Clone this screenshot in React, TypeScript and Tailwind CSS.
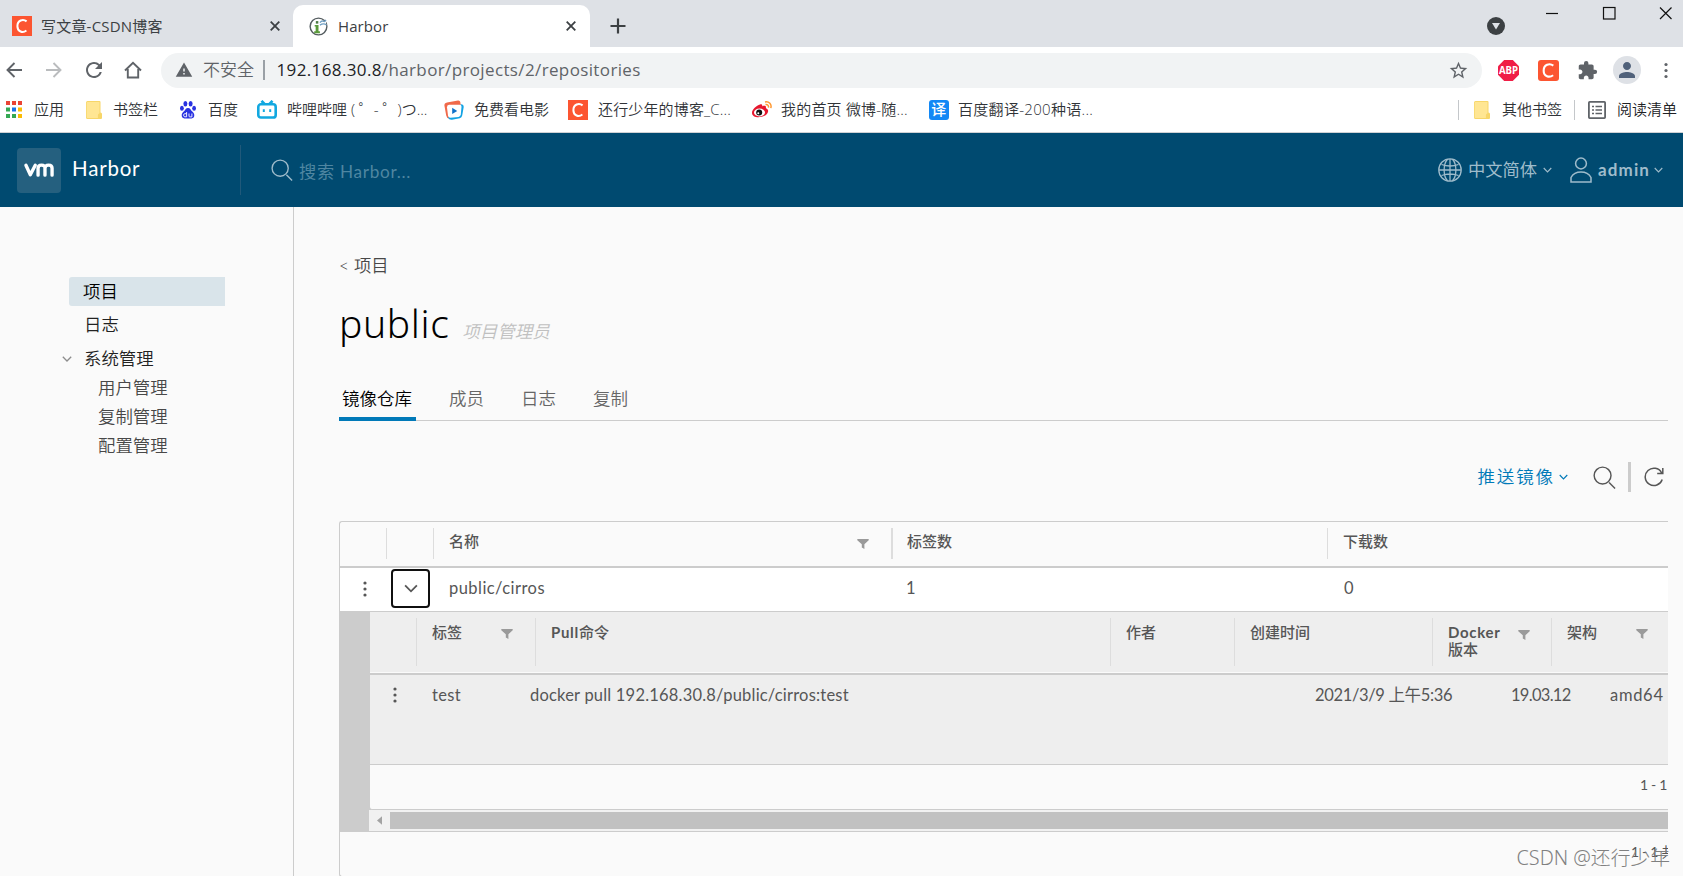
import type { ReactNode } from "react";
import { MdExtension, MdPerson, MdStarBorder, MdWarning, MdRefresh } from "react-icons/md";

const Chevron = ({ className }: { className: string }) => (
  <svg viewBox="0 0 10 6" fill="none" stroke="currentColor" strokeWidth="1.3" className={className}>
    <path d="M0.8 0.8 5 5 9.2 0.8" />
  </svg>
);

const Close = ({ className }: { className: string }) => (
  <svg viewBox="0 0 10 10" fill="none" stroke="#3c4043" strokeWidth="1.8" className={className}>
    <path d="M0.7 0.7 9.3 9.3M9.3 0.7 0.7 9.3" />
  </svg>
);

const Dots = ({ className }: { className: string }) => (
  <svg viewBox="0 0 4 16" fill="currentColor" className={className}>
    <circle cx="2" cy="2" r="1.6" />
    <circle cx="2" cy="8" r="1.6" />
    <circle cx="2" cy="14" r="1.6" />
  </svg>
);

const Filter = () => (
  <svg viewBox="0 0 12 10" className="h-[10px] w-3 shrink-0" fill="#9a9a9a">
    <path d="M0.3 0h11.4v1.2L7.4 5.2V10L4.8 8.6V5.2L0.3 1.2z" />
  </svg>
);

const Search = ({ className }: { className: string }) => (
  <svg viewBox="0 0 24 24" fill="none" stroke="currentColor" strokeWidth="1.5" className={className}>
    <circle cx="10" cy="10" r="8.8" />
    <path d="M16.8 17.2 23 23.4" />
  </svg>
);

const CsdnMark = ({ className }: { className: string }) => (
  <svg viewBox="0 0 20 20" className={className}>
    <rect width="20" height="20" fill="#fc5531" />
    <path d="M14.6 5.4C11 2.6 5.4 4.3 5.4 10.2c0 5.6 5.4 7 9 4.3" fill="none" stroke="#fff" strokeWidth="2" />
  </svg>
);

const Folder = ({ className }: { className: string }) => (
  <svg viewBox="0 0 16 18" className={className}>
    <path d="M1.5 0h12q1 0 1 1v10.500q1.500 0 1.500 1.500v4q0 1-1 1H1.500Q0 18 0 16.500v-15Q0 0 1.500 0z" fill="#f7d669" />
    <path d="M1.500 1h12v11.200q-1.600.3-1.600 2V17H1.500q-.8 0-.8-.8V1.800Q.7 1 1.500 1z" fill="#ffe693" />
  </svg>
);

const Apps = ({ className }: { className: string }) => (
  <svg viewBox="0 0 16 17" className={className}>
    <path d="M0 0h4v4H0zM6 0h4v4H6zM12 0h4v4h-4z" fill="#ea4335" />
    <path d="M0 6.5h4v4H0z" fill="#34a853" />
    <path d="M6 6.5h4v4H6z" fill="#1a73e8" />
    <path d="M12 6.5h4v4h-4z" fill="#fbbc04" />
    <path d="M0 13h4v4H0zM6 13h4v4H6z" fill="#34a853" />
    <path d="M12 13h4v4h-4z" fill="#fbbc04" />
  </svg>
);

const Bili = ({ className }: { className: string }) => (
  <svg viewBox="0 0 20 19" className={className} fill="none" stroke="#12a8e0" strokeWidth="2.6">
    <path d="M4.500.8 7.500 4M15.500.8 12.500 4" />
    <rect x="1.300" y="4.300" width="17.400" height="13.200" rx="2.600" />
    <path d="M6.800 9.200v2.800M13.200 9.200v2.800" strokeWidth="2" />
  </svg>
);

const Movie = ({ className }: { className: string }) => (
  <svg viewBox="0 0 20 20" className={className}>
    <path d="M3 2.500 14 .4q2-.2 2.300 1.600l.5 3.500L5 6v12.500Q2.700 18 2.200 15.500L.4 5.500Q.2 3.200 3 2.500z" fill="#f0694a" />
    <path d="M17 4.200q2.700.2 2.700 2.700l-1.500 8.700q-.4 2.200-2.400 2.600L8 19.800q-3 .4-4-2.300z" fill="#12a3e4" />
    <path d="M5 4.800h10.600q2 0 1.900 2l-.7 7.800q-.2 2-2.200 2.300l-8.200.8q-2 0-2.400-2L3 7.300q-.1-2.300 2-2.500z" fill="#fff" />
    <path d="M8.200 7.700 13.200 10.900 8.200 14z" fill="#1272c8" />
  </svg>
);

const HarborMark = () => (
  <svg viewBox="0 0 20 20" className="size-[19px]">
    <circle cx="10" cy="10" r="8.800" fill="#fff" stroke="#555d60" strokeWidth="1.500" />
    <path d="M6 8.300h4v6.700h1.500v2H5.500v-2H7V10H6z" fill="#5b9a3b" />
    <path d="M7.200 4.300h2.600v2.700H7.200z" fill="#4d7a45" />
    <path d="M11.500 6q2-3 3.500-1.500t3-1.500v7.500q-3.500 1-6.500-2z" fill="#fff" />
    <path d="M11.500 6q2-2.500 3.500-1.500t2.800-1.500M11.500 8.500q4-2.500 7 0" stroke="#6f9fc4" strokeWidth="1.400" fill="none" />
  </svg>
);

const ListIcon = () => (
  <svg viewBox="0 0 18 18" className="h-[18px] w-[18px]" fill="none" stroke="#5f6368" strokeWidth="1.800">
    <rect x="0.900" y="0.900" width="16.200" height="16.200" rx="0.800" />
    <path d="M4 5.500h2M7.500 5.500h6.500M4 9h2M7.500 9h6.500M4 12.500h2M7.500 12.500h6.500" strokeWidth="1.500" />
  </svg>
);

const Bookmark = ({ icon, label, className }: { icon: ReactNode; label: string; className: string }) => (
  <div className={`flex shrink-0 items-center whitespace-nowrap ${className}`}>
    {icon}
    <span>{label}</span>
  </div>
);

function Browser() {
  return (
    <header className="h-[133px] border-b border-[#cfd1d4] bg-white font-['Open_Sans','Noto_Sans_CJK_SC',sans-serif] text-[15px] font-[350] text-[#303337]">
      <div className="flex h-[47px] justify-between bg-[#dee1e6]">
        <div className="flex font-normal text-[#3c4043]">
          <div className="flex h-[47px] w-[293px] items-center pt-[5px] pl-3">
            <CsdnMark className="size-5" />
            <span className="ml-[9px] w-[229px] text-[15px] tracking-[0.200px]">写文章-CSDN博客</span>
            <Close className="size-[10px]" />
          </div>
          <div className="mt-[5px] flex h-[42px] w-[297px] items-center rounded-t-[10px] bg-white pl-4">
            <HarborMark />
            <span className="ml-[10px] w-[228px] tracking-[0.100px]">Harbor</span>
            <Close className="size-[10px]" />
          </div>
          <svg viewBox="0 0 16 16" className="mt-[18px] ml-5 size-4" stroke="#3c4043" strokeWidth="2.200">
            <path d="M8 0.500v15M0.500 8h15" />
          </svg>
        </div>
        <div className="flex pr-[11px]">
          <svg viewBox="0 0 18 18" className="mt-[17px] size-[18px]">
            <circle cx="9" cy="9" r="9" fill="#3c4043" />
            <path d="M5 6h8l-4 6.500z" fill="#dee1e6" />
          </svg>
          <svg viewBox="0 0 126 14" className="mt-[6px] ml-[41px] h-[14px] w-[126px]" fill="none" stroke="#111" strokeWidth="1.200">
            <path d="M0 7.500h12" />
            <rect x="57.500" y="1.500" width="11.500" height="11.500" />
            <path d="M114 1.500 125.500 13M125.500 1.500 114 13" />
          </svg>
        </div>
      </div>

      <div className="flex h-[46px] items-center pl-[6px]">
        <svg viewBox="0 0 16 16" className="size-4" fill="none" stroke="#5f6368" strokeWidth="1.900">
          <path d="M16 8H1.500M8.500 1 1.500 8l7 7" />
        </svg>
        <svg viewBox="0 0 16 16" className="ml-6 size-4" fill="none" stroke="#babcbe" strokeWidth="1.900">
          <path d="M0 8h14.500M7.500 1l7 7-7 7" />
        </svg>
        <MdRefresh className="ml-5 size-6 text-[#5f6368]" />
        <svg viewBox="0 0 18 18" className="ml-[18px] size-[18px]" fill="none" stroke="#5f6368" strokeWidth="1.900">
          <path d="M1 9.500 9 1.800l8 7.700M3.800 8v8.500h10.400V8" />
        </svg>
        <div className="ml-[19px] flex h-[35px] w-[1321px] items-center rounded-full bg-[#f1f3f4] pr-3 pl-[14px] text-[17px]">
          <MdWarning className="size-[18px] text-[#5f6368]" />
          <span className="ml-[10px] text-[#5f6368]">不安全</span>
          <span className="mr-3 ml-[9px] h-5 w-[1.500px] bg-[#9aa0a6]" />
          <span className="grow font-normal tracking-[0.370px] text-[#5f6368]">
            <span className="text-[#202124]">192.168.30.8</span>/harbor/projects/2/repositories
          </span>
          <MdStarBorder className="mr-px size-[21px] text-[#5f6368]" />
        </div>
        <svg viewBox="0 0 22 22" className="ml-[16px] size-[21px]">
          <path d="M6.500 0h9L22 6.500v9L15.500 22h-9L0 15.500v-9z" fill="#f01e46" />
          <text x="11" y="15" textAnchor="middle" fontSize="11" fontWeight="700" fill="#fff" textLength="20" lengthAdjust="spacingAndGlyphs">ABP</text>
        </svg>
        <CsdnMark className="ml-[19px] size-[21px] rounded-[3px]" />
        <MdExtension className="ml-[18px] size-[21px] text-[#5f6368]" />
        <span className="ml-[15px] flex size-7 items-center justify-center rounded-full bg-[#dee1e6]">
          <MdPerson className="size-6 text-[#50617a]" />
        </span>
        <Dots className="ml-[23px] h-[17px] w-1 text-[#5f6368]" />
      </div>

      <div className="flex h-[33px] items-center pl-[6px]">
        <Bookmark className="w-[80px] gap-3" icon={<Apps className="h-[17px] w-4" />} label="应用" />
        <Bookmark className="w-[94px] gap-[11px]" icon={<Folder className="h-[18px] w-4" />} label="书签栏" />
        <Bookmark
          className="w-[77px] gap-3"
          icon={
            <svg viewBox="0 0 16 18" className="h-[18px] w-4" fill="#2932e1">
              <ellipse cx="5.400" cy="2.800" rx="2" ry="2.700" />
              <ellipse cx="10.600" cy="2.800" rx="2" ry="2.700" />
              <ellipse cx="1.900" cy="7.200" rx="1.900" ry="2.500" />
              <ellipse cx="14.100" cy="7.200" rx="1.900" ry="2.500" />
              <path d="M8 7c2.200 0 2.600 1.900 4 3.300 1.600 1.500 2.700 2.700 2.200 4.900-.6 2.800-3.800 2.200-6.200 2.200s-5.600.6-6.200-2.200c-.5-2.200.6-3.400 2.200-4.900C5.400 8.900 5.800 7 8 7z" />
              <path d="M6.600 11v4.800H4.800q-1.200-.2-1.200-1.600t1.200-1.500h1.800M9 12.500v2.600q0 .8.900.8h2v-3.400" fill="none" stroke="#fff" strokeWidth="0.900" />
            </svg>
          }
          label="百度"
        />
        <Bookmark className="w-[187px] gap-[10px]" icon={<Bili className="h-[19px] w-5" />} label="哔哩哔哩 ( ゜- ゜)つ..." />
        <Bookmark className="w-[124px] gap-[10px]" icon={<Movie className="size-5" />} label="免费看电影" />
        <Bookmark className="w-[184px] gap-[10px] tracking-[0.150px]" icon={<CsdnMark className="size-5" />} label="还行少年的博客_C..." />
        <Bookmark
          className="w-[177px] gap-[9px] tracking-[0.200px]"
          icon={
            <svg viewBox="0 0 20 17" className="h-[17px] w-5">
              <path d="M8 3.500c1.500-.8 2.500 0 2.300 1.700 2-.9 4-.5 3.600 1.300-.1.700.2.900.9 1.300 2.200 1.200 1.400 4-.4 5.800C11.300 16.800 0 18 0 11.700 0 8.500 4.500 4.500 8 3.500z" fill="#e6162d" />
              <ellipse cx="7.500" cy="11.500" rx="5.500" ry="3.900" fill="#fff" />
              <circle cx="7.200" cy="11.600" r="3" fill="#111" />
              <circle cx="6.300" cy="12.200" r="1" fill="#fff" />
              <path d="M13 .9c4-.8 7 2.300 5.800 6.200M13.500 3.600c2-.4 3.500 1 2.900 3" fill="none" stroke="#ff9933" strokeWidth="1.500" />
            </svg>
          }
          label="我的首页 微博-随..."
        />
        <Bookmark
          className="gap-[9px] tracking-[0.300px]"
          icon={<span className="flex size-5 items-center justify-center rounded-[3px] bg-[#1388f5] text-[15px] font-medium text-white">译</span>}
          label="百度翻译-200种语..."
        />
        <div className="ml-auto flex h-5 items-center pr-[6px]">
          <span className="mr-[15px] h-5 w-px bg-[#c4c7ca]" />
          <Bookmark className="w-[100px] gap-3" icon={<Folder className="h-[18px] w-4" />} label="其他书签" />
          <span className="mr-[13px] h-5 w-px bg-[#c4c7ca]" />
          <Bookmark className="gap-[11px] text-[#202124]" icon={<ListIcon />} label="阅读清单" />
        </div>
      </div>
    </header>
  );
}

function AppHeader() {
  return (
    <div className="flex h-[74px] items-center bg-[#004a70] text-[#9fbccb]">
      <div className="ml-[17px] flex h-[45px] w-11 items-center justify-center rounded-[4px] bg-[#25607f]">
        <svg viewBox="0 0 32 15" className="h-[14px] w-[32px]" fill="none" stroke="#fff" strokeWidth="3.600" strokeLinecap="round" strokeLinejoin="round">
          <path d="M2 2.500 6.700 12.500 12 2.500" />
          <path d="M15 13V5.500Q15 2.300 18.800 2.300T22.400 5.500V13M22.400 5.500Q22.600 2.300 26.300 2.300T30 5.500V13" />
        </svg>
      </div>
      <span className="mb-1 ml-[11px] w-[168px] text-[20.500px] tracking-[0.800px] text-white">Harbor</span>
      <span className="h-[50px] w-px bg-[#20597a]" />
      <Search className="ml-[30px] size-[22px]" />
      <span className="mt-[3px] ml-[6px] grow text-[17.200px] tracking-[0.700px] text-[#4f86a1]">搜索 Harbor...</span>
      <svg viewBox="0 0 24 24" className="size-6" fill="none" stroke="currentColor" strokeWidth="1.300">
        <circle cx="12" cy="12" r="11.200" />
        <path d="M1 12h22M3.500 6.500Q12 9.500 20.500 6.500M3.500 17.500Q12 14.500 20.500 17.500M9.500 1.200C5 6 5 18 9.500 22.800M14.500 1.200C19 6 19 18 14.500 22.800M12 1v22" />
      </svg>
      <span className="ml-[6px] text-[17.300px]">中文简体</span>
      <Chevron className="ml-[6px] h-[6px] w-[9px]" />
      <svg viewBox="0 0 22 26" className="ml-[18px] h-[26px] w-[22px]" fill="none" stroke="currentColor" strokeWidth="1.500">
        <circle cx="11" cy="6.500" r="5.400" />
        <path d="M1 25V20.500Q4 15 11 15T21 20.500V25z" />
      </svg>
      <span className="ml-[6px] text-[17px] font-bold tracking-[1.100px]">admin</span>
      <Chevron className="mr-[20px] ml-[4px] h-[6px] w-[9px]" />
    </div>
  );
}

function Sidebar() {
  return (
    <nav className="w-[294px] shrink-0 border-r border-[#ccc] pt-[70px] text-[17.400px] leading-[29px] font-[350] text-[#222]">
      <div className="ml-[69px] h-[29px] w-[156px] rounded-l-[3px] bg-[#d9e4ea] pl-[14px] text-black">项目</div>
      <div className="mt-[4px] ml-[84px]">日志</div>
      <div className="mt-[5px] flex items-center pl-[62px]">
        <Chevron className="mr-[12px] h-[6px] w-[10px] text-[#8c8c8c]" />
        系统管理
      </div>
      <div className="ml-[98px] text-[#484848]">
        <div>用户管理</div>
        <div>复制管理</div>
        <div>配置管理</div>
      </div>
    </nav>
  );
}

const Sep = ({ className }: { className: string }) => <span className={`shrink-0 bg-[#ddd] ${className}`} />;

function InnerGrid() {
  return (
    <div className="flex h-[220px] border-b border-[#ccc] bg-[#ccc]">
      <div className="ml-[29px] flex w-[1299px] flex-col overflow-hidden">
        <div className="ml-px flex h-[60px] shrink-0 bg-[#eee] pt-[6px] text-[15px] leading-[17px] font-medium">
          <Sep className="ml-[46px] h-12 w-px" />
          <div className="mt-[6px] flex h-[17px] w-[118px] items-center pl-[15px]">
            <span className="mr-[39px]">标签</span>
            <span className="mt-[3px]"><Filter /></span>
          </div>
          <Sep className="h-12 w-px" />
          <div className="mt-[6px] w-[574px] pl-[15px]"><span className="font-bold tracking-[0.700px]">Pull</span>命令</div>
          <Sep className="h-12 w-px" />
          <div className="mt-[6px] w-[123px] pl-[15px]">作者</div>
          <Sep className="h-12 w-px" />
          <div className="mt-[6px] w-[197px] pl-[15px]">创建时间</div>
          <Sep className="h-12 w-px" />
          <div className="mt-[6px] flex h-[34px] w-[118px] pl-[15px]">
            <span className="w-[70px]"><span className="font-bold tracking-[0.700px]">Docker</span><br />版本</span>
            <span className="mt-[6px]"><Filter /></span>
          </div>
          <Sep className="h-12 w-px" />
          <div className="mt-[6px] flex h-[17px] items-center pl-[15px]">
            <span className="mr-[39px]">架构</span>
            <span className="mt-[3px]"><Filter /></span>
          </div>
        </div>
        <div className="ml-px h-px shrink-0 bg-[#fafafa]" />
        <div className="ml-px h-[2px] shrink-0 bg-[#ccc]" />
        <div className="ml-px flex h-[90px] shrink-0 items-start border-b border-[#ccc] bg-[#eee] pt-2 text-[16.500px] leading-6 whitespace-nowrap">
          <Dots className="mt-1 ml-[23px] h-4 w-1" />
          <span className="ml-[35px] w-[98px] tracking-[0.300px]">test</span>
          <span className="w-[785px] tracking-[0.200px]">docker pull 192.168.30.8/public/cirros:test</span>
          <span className="w-[196px] tracking-[-0.350px]">2021/3/9 上午5:36</span>
          <span className="w-[99px] tracking-[-0.700px]">19.03.12</span>
          <span className="tracking-[0.700px]">amd64</span>
        </div>
        <div className="ml-px h-[45px] shrink-0 rounded-bl-[3px] border-b border-[#ccc] bg-[#fafafa] pt-2 pr-[1px] text-right text-[14px] leading-6 tracking-[-0.300px]">1 - 1</div>
        <div className="flex h-[21px] items-center bg-[#f1f1f1]">
          <svg viewBox="0 0 6 10" className="mr-[8px] ml-2 h-[9px] w-[5px]" fill="#a3a3a3">
            <path d="M6 0v10L0 5z" />
          </svg>
          <span className="h-[17px] grow bg-[#c1c1c1]" />
        </div>
      </div>
    </div>
  );
}

function Main() {
  return (
    <main className="relative w-[1389px] pl-[45px] text-[#565656]">
      <div className="w-[1329px] overflow-hidden">
        <div className="mt-[47px] text-[17.300px] leading-6 font-[350] text-[#484848]">
          <span className="mr-[5px]">&lt;</span>项目
        </div>
        <div className="mt-[21px] flex h-12 items-baseline">
          <h1 className="font-['Noto_Sans','Open_Sans',sans-serif] text-[39px] leading-12 font-light tracking-[0.600px] text-black">public</h1>
          <span className="ml-[13px] text-[17.500px] font-[350] text-[#c0c0c0] italic">项目管理员</span>
        </div>
        <div className="relative mt-[33px] flex h-[41px] border-b border-[#ccc] text-[17.500px] leading-[38px] font-[350] text-[#666]">
          <span className="h-[41px] w-[77px] border-b-4 border-[#0079b8] pl-[3px] text-black">镜像仓库</span>
          <span className="ml-[33px] w-[72px]">成员</span>
          <span className="w-[72px]">日志</span>
          <span>复制</span>
        </div>
        <div className="mt-[41px] flex h-[30px] items-center justify-end pr-[4px]">
          <span className="text-[17.500px] font-[350] tracking-[1.900px] text-[#0079b8]">推送镜像</span>
          <Chevron className="mr-[25px] ml-[4px] h-[6px] w-[9px] text-[#0079b8]" />
          <Search className="size-[23px]" />
          <span className="mr-[13px] ml-[12px] h-[30px] w-[3px] bg-[#ccc]" />
          <svg viewBox="0 0 20 20" className="size-5" fill="none" stroke="currentColor" strokeWidth="1.500">
            <path d="M18.200 12.500A8.700 8.700 0 1 1 17.600 5.800M18.800 1v5.600h-5.600" />
          </svg>
        </div>
        <div className="mt-[29px] h-[356px] overflow-hidden rounded-tl-[3px] rounded-bl-[3px] border-t border-b border-l border-[#ccc]">
          <div className="flex h-[46px] border-b-2 border-[#ccc] pt-[6px] text-[15px] leading-[26px] font-medium">
            <Sep className="ml-[46px] h-[31px] w-px" />
            <Sep className="ml-[46px] h-[31px] w-px" />
            <div className="flex w-[457px] items-center justify-between pr-[22px] pb-[12px] pl-[15px]">
              名称
              <span className="mt-[6px]"><Filter /></span>
            </div>
            <Sep className="h-[31px] w-[2px]" />
            <div className="w-[434px] pl-[14px]">标签数</div>
            <Sep className="h-[31px] w-px" />
            <div className="pl-[15px]">下载数</div>
          </div>
          <div className="flex h-[44px] items-center border-b border-[#ccc] bg-white pb-[2px] text-[16.500px]">
            <Dots className="ml-[23px] h-4 w-1" />
            <span className="mt-[-1px] ml-[24px] flex size-[39px] shrink-0 items-center justify-center rounded-[4px] border-2 border-[#101010]">
              <Chevron className="h-[9px] w-[14px]" />
            </span>
            <span className="ml-[19px] w-[457px] tracking-[0.450px]">public/cirros</span>
            <span className="w-[438px]">1</span>
            <span>0</span>
          </div>
          <InnerGrid />
          <div className="mt-[8px] ml-auto h-6 w-[37px] overflow-hidden text-[14px] leading-6 tracking-[-0.300px] whitespace-nowrap">1 - 1 共 1 条记录</div>
        </div>
      </div>
      <span className="absolute right-[13px] bottom-0 font-['Noto_Sans','Noto_Sans_CJK_SC',sans-serif] text-[19.800px] leading-9 font-light whitespace-nowrap text-[#808080]">CSDN @还行少年</span>
    </main>
  );
}

export default function App() {
  return (
    <div className="h-[876px] w-[1683px] overflow-hidden bg-[#fafafa]">
      <Browser />
      <div className="font-['Lato','Noto_Sans_CJK_SC',sans-serif]">
        <AppHeader />
        <div className="flex h-[669px]">
          <Sidebar />
          <Main />
        </div>
      </div>
    </div>
  );
}
